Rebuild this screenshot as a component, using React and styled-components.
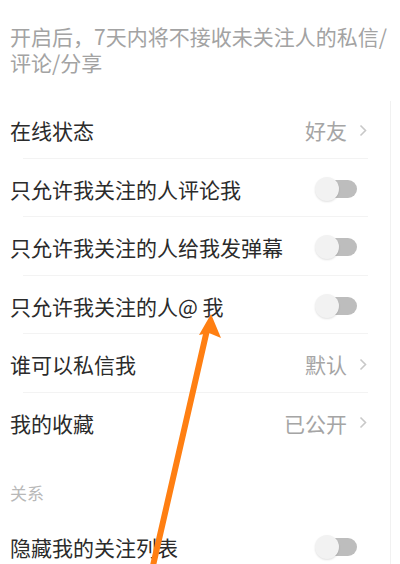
import React from "react"
import styled, { createGlobalStyle } from "styled-components"

const GlobalStyle = createGlobalStyle`
    html, body {
        margin: 0;
        padding: 0;
        background: #ffffff;
    }
    body {
        font-family: "Noto Sans CJK SC", "Noto Sans", sans-serif;
    }
`

const Page = styled.div`
    position: relative;
    width: 400px;
    height: 564px;
    overflow: hidden;
    background: #ffffff;
`

const Notice = styled.p`
    margin: 0;
    padding: 23px 0 0 10px;
    font-size: 21px;
    line-height: 26px;
    color: #a3a3a3;
    height: 76px;
    box-sizing: border-box;
`

const List = styled.div`
    width: 391px;
    margin-top: 25px;
    border-right: 1px solid #f1f1f1;
    box-sizing: border-box;
`

const Row = styled.div`
    position: relative;
    display: flex;
    align-items: center;
    height: 58.5px;
    padding: 0 23px 0 10px;

    &::after {
        content: "";
        display: ${(props) => (props.last ? "none" : "block")};
        position: absolute;
        left: 23px;
        right: 22px;
        bottom: 1px;
        height: 1px;
        background: #f3f3f3;
    }
`

const Label = styled.span`
    flex: 1;
    font-size: 21px;
    color: #2b2b2b;
    white-space: nowrap;
`

const Value = styled.span`
    display: flex;
    align-items: center;
    gap: 12px;
    font-size: 21px;
    color: #a5a5a5;
`

const SectionHeader = styled.div`
    display: flex;
    align-items: flex-end;
    height: 66px;
    padding: 0 0 13px 10px;
    box-sizing: border-box;
    font-size: 17px;
    color: #b8b8b8;
`

const ToggleWrap = styled.span`
    position: relative;
    display: inline-block;
    width: 42px;
    height: 24px;
    margin-right: 10px;
`

const Track = styled.span`
    position: absolute;
    left: 6px;
    right: 0;
    top: 3px;
    height: 18px;
    border-radius: 9px;
    background: #bdbdbd;
`

const Knob = styled.span`
    position: absolute;
    left: 0;
    top: 0;
    width: 24px;
    height: 24px;
    border-radius: 50%;
    background: #f2f2f2;
    box-shadow: 0 1px 2px rgba(0, 0, 0, 0.12);
`

const Arrow = styled.svg`
    position: absolute;
    left: 0;
    top: 0;
    pointer-events: none;
`

const Chevron = () => (
    <svg width="8" height="13" viewBox="0 0 8 13">
        <polyline points="1.5,1.5 6.5,6.5 1.5,11.5" fill="none" stroke="#c8c8c8" strokeWidth="1.6" />
    </svg>
)

const Toggle = () => (
    <ToggleWrap>
        <Track />
        <Knob />
    </ToggleWrap>
)

const App = () => {
    return (
        <Page>
            <GlobalStyle />
            <Notice>
                开启后，7天内将不接收未关注人的私信/
                <br />
                评论/分享
            </Notice>
            <List>
                <Row>
                    <Label>在线状态</Label>
                    <Value>
                        好友
                        <Chevron />
                    </Value>
                </Row>
                <Row>
                    <Label>只允许我关注的人评论我</Label>
                    <Toggle />
                </Row>
                <Row>
                    <Label>只允许我关注的人给我发弹幕</Label>
                    <Toggle />
                </Row>
                <Row>
                    <Label>只允许我关注的人@ 我</Label>
                    <Toggle />
                </Row>
                <Row>
                    <Label>谁可以私信我</Label>
                    <Value>
                        默认
                        <Chevron />
                    </Value>
                </Row>
                <Row last>
                    <Label>我的收藏</Label>
                    <Value>
                        已公开
                        <Chevron />
                    </Value>
                </Row>
                <SectionHeader>关系</SectionHeader>
                <Row last>
                    <Label>隐藏我的关注列表</Label>
                    <Toggle />
                </Row>
            </List>
            <Arrow width="400" height="564" viewBox="0 0 400 564">
                <line x1="152" y1="570" x2="207" y2="330" stroke="#ff7f12" strokeWidth="6" strokeLinecap="round" />
                <polygon points="211,314 221,338 209,333 199,335" fill="#ff7f12" />
            </Arrow>
        </Page>
    )
}

export default App
